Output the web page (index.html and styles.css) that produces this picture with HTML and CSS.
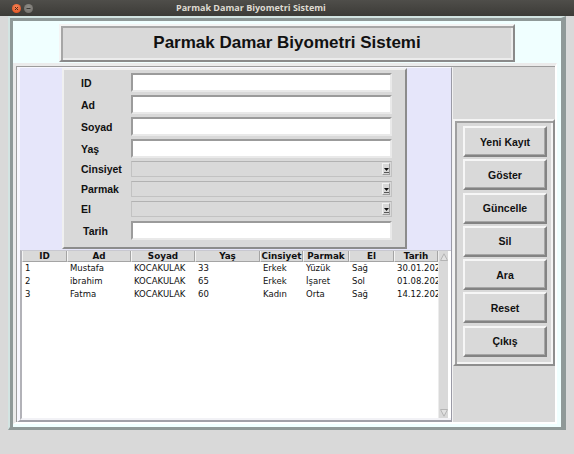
FILE: index.html
```html
<!DOCTYPE html>
<html lang="tr">
<head>
<meta charset="utf-8">
<title>Parmak Damar Biyometri Sistemi</title>
<link rel="stylesheet" href="styles.css">
</head>
<body>
<div class="titlebar">
  <div class="winbtns">
    <span class="wb wb-close"><svg width="9" height="9" viewBox="0 0 9 9"><path d="M3 3l3 3M6 3l-3 3" stroke="#4a2a1a" stroke-width="1" fill="none"/></svg></span>
    <span class="wb wb-min"><svg width="9" height="9" viewBox="0 0 9 9"><path d="M2.5 4.5h4" stroke="#3a3935" stroke-width="1" fill="none"/></svg></span>
  </div>
  <div class="wtitle">Parmak Damar Biyometri Sistemi</div>
</div>

<div class="client">
  <div class="outer">
    <div class="heading">Parmak Damar Biyometri Sistemi</div>

    <div class="mainframe">
      <div class="leftpane">
        <div class="form">
          <div class="row"><span class="lbl">ID</span><span class="entry"></span></div>
          <div class="row"><span class="lbl">Ad</span><span class="entry"></span></div>
          <div class="row"><span class="lbl">Soyad</span><span class="entry"></span></div>
          <div class="row"><span class="lbl">Yaş</span><span class="entry"></span></div>
          <div class="row row-combo first-combo"><span class="lbl">Cinsiyet</span><span class="combo"><span class="drop"><svg width="5" height="6" viewBox="0 0 5 6"><path d="M0 1h5L2.5 4z" fill="#111"/><path d="M0 5.5h5" stroke="#555" stroke-width="1"/></svg></span></span></div>
          <div class="row row-combo"><span class="lbl">Parmak</span><span class="combo"><span class="drop"><svg width="5" height="6" viewBox="0 0 5 6"><path d="M0 1h5L2.5 4z" fill="#111"/><path d="M0 5.5h5" stroke="#555" stroke-width="1"/></svg></span></span></div>
          <div class="row row-combo"><span class="lbl">El</span><span class="combo"><span class="drop"><svg width="5" height="6" viewBox="0 0 5 6"><path d="M0 1h5L2.5 4z" fill="#111"/><path d="M0 5.5h5" stroke="#555" stroke-width="1"/></svg></span></span></div>
          <div class="row row-last"><span class="lbl lbl-tarih">Tarih</span><span class="entry"></span></div>
        </div>

        <div class="tree">
          <div class="grid">
            <div class="th">ID</div><div class="th">Ad</div><div class="th">Soyad</div><div class="th">Yaş</div>
            <div class="th">Cinsiyet</div><div class="th">Parmak</div><div class="th">El</div><div class="th">Tarih</div>

            <div class="td">1</div><div class="td">Mustafa</div><div class="td">KOCAKULAK</div><div class="td">33</div>
            <div class="td">Erkek</div><div class="td">Yüzük</div><div class="td">Sağ</div><div class="td">30.01.202</div>

            <div class="td">2</div><div class="td">ibrahim</div><div class="td">KOCAKULAK</div><div class="td">65</div>
            <div class="td">Erkek</div><div class="td">İşaret</div><div class="td">Sol</div><div class="td">01.08.202</div>

            <div class="td">3</div><div class="td">Fatma</div><div class="td">KOCAKULAK</div><div class="td">60</div>
            <div class="td">Kadın</div><div class="td">Orta</div><div class="td">Sağ</div><div class="td">14.12.202</div>
          </div>
          <div class="vscroll">
            <span class="sarrow"><svg width="8" height="8" viewBox="0 0 8 8"><path d="M0.5 7.5L4 0.8L7.5 7.5z" fill="#e2e2e2" stroke="#b4b4b4" stroke-width="1"/></svg></span>
            <span class="strough"></span>
            <span class="sarrow"><svg width="8" height="8" viewBox="0 0 8 8"><path d="M0.5 0.5L4 7.2L7.5 0.5z" fill="#e2e2e2" stroke="#b4b4b4" stroke-width="1"/></svg></span>
          </div>
        </div>
      </div>

      <div class="rightpane">
        <div class="btnframe">
          <button class="btn">Yeni Kayıt</button>
          <button class="btn">Göster</button>
          <button class="btn">Güncelle</button>
          <button class="btn">Sil</button>
          <button class="btn">Ara</button>
          <button class="btn">Reset</button>
          <button class="btn">Çıkış</button>
        </div>
      </div>
    </div>
  </div>
</div>
</body>
</html>
```

FILE: styles.css
```css
html, body {
  margin: 0;
  padding: 0;
}
body {
  width: 574px;
  height: 454px;
  overflow: hidden;
  background: #d9d9d9;
  font-family: "Liberation Sans", Arial, sans-serif;
}

/* window decoration */
.titlebar {
  height: 16px;
  background: linear-gradient(#4f4e4a, #3c3b37);
  display: flex;
  align-items: center;
}
.winbtns {
  display: flex;
  gap: 3px;
  margin-left: 12px;
}
.wb {
  width: 9px;
  height: 9px;
  border-radius: 50%;
  display: flex;
}
.wb-close { background: radial-gradient(circle at 50% 35%, #f5865a, #dd4814); }
.wb-min { background: radial-gradient(circle at 50% 35%, #8e8c87, #6d6b66); }
.wtitle {
  margin-left: 143px;
  color: #dfdbd2;
  font-family: "Open Sans", "DejaVu Sans", sans-serif;
  font-weight: 700;
  font-size: 9px;
  line-height: 16px;
  white-space: nowrap;
}

/* client area */
.client {
  height: 438px;
  padding-left: 8px;
}
.outer {
  box-sizing: border-box;
  width: 558px;
  height: 414px;
  background: #f0ffff;
  border-style: solid;
  border-width: 2px 5px 3px 2px;
  border-color: #d3e4e2 #8f9998 #8f9998 #d3e4e2;
  box-shadow: inset 3px 3px 0 #8f9998;
  padding: 3px 4px 3px 3px;
}

.heading {
  box-sizing: border-box;
  margin: 3px 0 0 46px;
  width: 456px;
  height: 38px;
  background: #d9d9d9;
  border-style: solid;
  border-width: 2px;
  border-color: #f4f4f4 #8a8a8a #8a8a8a #f4f4f4;
  box-shadow: inset 2px 2px 0 #a6a6a6, inset -2px -2px 0 #ececec;
  display: flex;
  align-items: center;
  justify-content: center;
  font-weight: 700;
  font-size: 17px;
  color: #111;
}

.mainframe {
  box-sizing: border-box;
  margin-top: 1px;
  width: 544px;
  height: 361px;
  display: flex;
  background: #d9d9d9;
  border-style: solid;
  border-width: 3px 2px 2px 3px;
  border-color: #ebebeb #ffffff #ffffff #ebebeb;
  box-shadow: inset 1px 1px 0 #9c9c9c;
  padding: 1px 0 0 1px;
}

/* lavender pane with form and table */
.leftpane {
  box-sizing: border-box;
  width: 435px;
  background: #e6e6fa;
  border-style: solid;
  border-width: 1px 1px 2px 3px;
  border-color: #f7f7fe #9a9aa6 #a0a0a8 #f7f7fe;
  display: flex;
  flex-direction: column;
}

.form {
  box-sizing: border-box;
  margin-left: 42px;
  width: 345px;
  height: 181px;
  background: #d9d9d9;
  border-style: solid;
  border-width: 2px;
  border-color: #f0f0f0 #8c8c8c #8c8c8c #f0f0f0;
  padding-top: 3px;
}
.row {
  display: flex;
  align-items: center;
  height: 19px;
  margin-bottom: 3px;
}
.row-combo {
  height: 16px;
  margin-bottom: 4px;
}
.first-combo { margin-top: 2px; }
.row-combo + .row-last { margin-top: 1px; }
.lbl {
  box-sizing: border-box;
  width: 67px;
  padding-left: 17px;
  font-weight: 700;
  font-size: 10.5px;
  color: #111;
}
.lbl-tarih { padding-left: 19px; }
.entry {
  box-sizing: border-box;
  width: 261px;
  height: 19px;
  background: #fff;
  border-style: solid;
  border-width: 2px;
  border-color: #9b9b9b #e9e9e9 #e9e9e9 #9b9b9b;
}
.combo {
  box-sizing: border-box;
  width: 261px;
  height: 16px;
  background: #d9d9d9;
  border: 1px solid #c2c2c2;
  border-top-color: #b2b2b2;
  display: flex;
  justify-content: flex-end;
  padding: 1px 1px 1px 0;
}
.drop {
  box-sizing: border-box;
  width: 8px;
  height: 12px;
  border-style: solid;
  border-width: 1px;
  border-color: #f2f2f2 #9a9a9a #9a9a9a #f2f2f2;
  display: flex;
  align-items: flex-end;
  justify-content: center;
  padding-bottom: 1px;
}

/* table */
.tree {
  box-sizing: border-box;
  margin-top: 1px;
  height: 170px;
  display: flex;
  background: #fff;
  border-left: 2px solid #b2b2b8;
  border-top: 1px solid #c8c8d0;
  border-bottom: 2px solid #f2f2f6;
}
.grid {
  display: grid;
  grid-template-columns: 45px 64px 64px 65px 43px 46px 45px 44px;
  grid-template-rows: 11px;
  grid-auto-rows: 13px;
  align-content: start;
  width: 416px;
  font-family: "DejaVu Sans", sans-serif;
  color: #111;
}
.th {
  box-sizing: border-box;
  height: 11px;
  background: #d9d9d9;
  border-left: 1px solid #f4f4f4;
  border-right: 1px solid #a4a4a4;
  border-bottom: 1px solid #a4a4a4;
  font-weight: 700;
  font-size: 8.8px;
  line-height: 10px;
  text-align: center;
  white-space: nowrap;
}
.td {
  font-size: 8.5px;
  line-height: 13px;
  padding-left: 3px;
  white-space: nowrap;
}

.vscroll {
  box-sizing: border-box;
  width: 10px;
  background: #d9d9d9;
  border-left: 1px solid #ececec;
  display: flex;
  flex-direction: column;
}
.sarrow {
  height: 11px;
  display: flex;
  align-items: center;
  justify-content: center;
}
.strough { flex: 1; }

/* button column */
.rightpane {
  box-sizing: border-box;
  flex: 1;
  border-left: 1px solid #f2f2f2;
  padding-top: 52px;
}
.btnframe {
  box-sizing: border-box;
  width: 102px;
  height: 247px;
  border-style: solid;
  border-width: 2px;
  border-color: #f4f4f4 #8e8e8e #8e8e8e #f4f4f4;
  box-shadow: inset 2px 2px 0 #a0a0a0, inset -2px -2px 0 #f4f4f4;
  padding: 5px 0 0 8px;
  display: flex;
  flex-direction: column;
  gap: 2.3px;
}
.btn {
  box-sizing: border-box;
  width: 84px;
  height: 31px;
  margin: 0;
  padding: 0;
  background: #d9d9d9;
  border-style: solid;
  border-width: 2px;
  border-color: #f6f6f6 #838383 #838383 #f6f6f6;
  box-shadow: inset -1px -1px 0 #a6a6a6;
  font-family: "Liberation Sans", Arial, sans-serif;
  font-weight: 700;
  font-size: 10.5px;
  color: #111;
}
```
